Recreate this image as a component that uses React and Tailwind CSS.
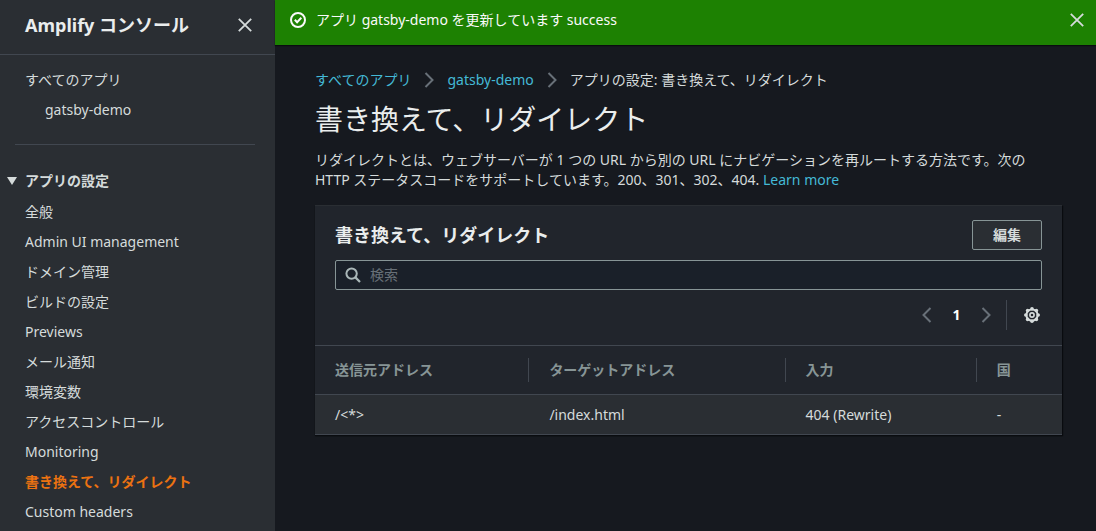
import React from "react";

const settingsLinks = [
  "全般",
  "Admin UI management",
  "ドメイン管理",
  "ビルドの設定",
  "Previews",
  "メール通知",
  "環境変数",
  "アクセスコントロール",
  "Monitoring",
  "書き換えて、リダイレクト",
  "Custom headers",
];
const activeLink = "書き換えて、リダイレクト";

const columns = [
  { label: "送信元アドレス", width: "w-[28.7%]" },
  { label: "ターゲットアドレス", width: "w-[34.3%]" },
  { label: "入力", width: "w-[25.6%]" },
  { label: "国", width: "w-[11.4%]" },
];

const rows = [["/<*>", "/index.html", "404 (Rewrite)", "-"]];

function Icon({ className = "", children }) {
  return (
    <svg
      viewBox="0 0 16 16"
      className={`size-4 shrink-0 fill-none stroke-current ${className}`}
      aria-hidden="true"
    >
      {children}
    </svg>
  );
}

function CloseIcon() {
  return (
    <Icon>
      <path d="M1.8 1.8l12.4 12.4M14.2 1.8L1.8 14.2" strokeWidth="1.8" />
    </Icon>
  );
}

function ChevronRight() {
  return (
    <Icon>
      <path d="M4.5 1l7 7-7 7" strokeWidth="2" />
    </Icon>
  );
}

function ChevronLeft() {
  return (
    <Icon>
      <path d="M11.5 1l-7 7 7 7" strokeWidth="2" />
    </Icon>
  );
}

function SuccessIcon() {
  return (
    <Icon>
      <circle cx="8" cy="8" r="7" strokeWidth="2" />
      <path d="M4.8 7.8l2.3 2.4 4.2-4.4" strokeWidth="2" />
    </Icon>
  );
}

function SearchIcon() {
  return (
    <Icon>
      <circle cx="6.6" cy="6.6" r="5.2" strokeWidth="2" />
      <path d="M10.4 10.4l4.6 4.6" strokeWidth="2.2" />
    </Icon>
  );
}

function GearIcon() {
  return (
    <Icon>
      <circle cx="8" cy="8" r="5.6" strokeWidth="2" />
      <g className="fill-current stroke-none">
        <circle cx="8" cy="1.8" r="1.8" />
        <circle cx="12.4" cy="3.6" r="1.8" />
        <circle cx="14.2" cy="8" r="1.8" />
        <circle cx="12.4" cy="12.4" r="1.8" />
        <circle cx="8" cy="14.2" r="1.8" />
        <circle cx="3.6" cy="12.4" r="1.8" />
        <circle cx="1.8" cy="8" r="1.8" />
        <circle cx="3.6" cy="3.6" r="1.8" />
      </g>
      <circle cx="8" cy="8" r="2.1" strokeWidth="1.6" />
    </Icon>
  );
}

function Sidebar() {
  return (
    <aside className="w-[275px] shrink-0 bg-[#2a2e33]">
      <header className="flex h-[55px] items-center justify-between border-b border-[#414750] pr-[22px] pb-1 pl-[25px]">
        <h2 className="text-lg font-bold text-[#eaeded]">Amplify コンソール</h2>
        <button type="button" aria-label="閉じる" className="text-[#d5dbdb]">
          <CloseIcon />
        </button>
      </header>
      <nav>
        <ul className="flex flex-col gap-[10px] px-[25px] pt-[15px]">
          <li>
            <a href="#apps">すべてのアプリ</a>
          </li>
          <li className="pl-5">
            <a href="#gatsby-demo">gatsby-demo</a>
          </li>
        </ul>
        <hr className="mt-6 mr-5 ml-[15px] border-[#414750]" />
        <details open className="pt-[26px]">
          <summary className="flex cursor-pointer list-none items-center gap-2 pl-[7px] font-bold">
            <svg viewBox="0 0 10 8" className="h-2 w-[10px] fill-current" aria-hidden="true">
              <path d="M0 0h10L5 8z" />
            </svg>
            アプリの設定
          </summary>
          <ul className="mt-[11px] flex flex-col gap-[10px] px-[25px]">
            {settingsLinks.map((label) => (
              <li key={label}>
                <a
                  href="#settings"
                  className={label === activeLink ? "font-bold text-[#ec7211]" : ""}
                >
                  {label}
                </a>
              </li>
            ))}
          </ul>
        </details>
      </nav>
    </aside>
  );
}

function Flash() {
  return (
    <div
      role="status"
      className="flex items-center gap-[10px] bg-[#1d8102] pt-[10px] pr-[11px] pb-[15px] pl-[15px] text-[#fafafa] shadow-[0_1px_1px_0_#0a0c10]"
    >
      <SuccessIcon />
      <p className="grow">アプリ gatsby-demo を更新しています success</p>
      <button type="button" aria-label="閉じる" className="text-[#d5dbdb]">
        <CloseIcon />
      </button>
    </div>
  );
}

function Breadcrumbs() {
  return (
    <nav aria-label="パンくずリスト">
      <ol className="flex items-center gap-[10px]">
        <li>
          <a href="#apps" className="text-[#44b9d6]">すべてのアプリ</a>
        </li>
        <li className="flex items-center gap-[10px] text-[#687078]">
          <ChevronRight />
          <a href="#gatsby-demo" className="text-[#44b9d6]">gatsby-demo</a>
        </li>
        <li className="flex items-center gap-[10px] text-[#687078]">
          <ChevronRight />
          <span className="text-[#d5dbdb]">アプリの設定: 書き換えて、リダイレクト</span>
        </li>
      </ol>
    </nav>
  );
}

function RedirectsCard() {
  return (
    <section className="mt-[15px] border-t border-[#2a2e33] bg-[#21252c] shadow-[0_1px_1px_0_#0a0c10,1px_1px_1px_0_#0a0c10]">
      <div className="px-5 pt-[14px] pb-[15px]">
        <div className="flex items-center justify-between">
          <h2 className="text-lg font-bold text-[#eaeded]">書き換えて、リダイレクト</h2>
          <button
            type="button"
            className="h-[30px] rounded-[2px] border border-[#879596] bg-[#2a2e33] px-5 font-bold leading-[28px]"
          >
            編集
          </button>
        </div>
        <label className="mt-[10px] flex h-[30px] items-center gap-[9px] rounded-[2px] border border-[#879596] bg-[#1a2029] pl-[9px] text-[#aab7b8]">
          <SearchIcon />
          <input
            type="search"
            aria-label="検索"
            placeholder="検索"
            className="min-w-0 grow bg-transparent outline-none placeholder:text-[#687078]"
          />
        </label>
        <div className="mt-[10px] flex h-[30px] items-center justify-end">
          <button type="button" aria-label="前のページ" className="text-[#687078]">
            <ChevronLeft />
          </button>
          <button type="button" className="w-[43px] text-center font-bold text-white">1</button>
          <button type="button" aria-label="次のページ" className="text-[#687078]">
            <ChevronRight />
          </button>
          <span className="mr-[17px] ml-3 h-full border-l border-[#414750]" />
          <button type="button" aria-label="設定" className="mr-[2px] text-[#d5dbdb]">
            <GearIcon />
          </button>
        </div>
      </div>
      <table className="w-full table-fixed border-separate border-spacing-0 text-left">
        <thead>
          <tr>
            {columns.map(({ label, width }, i) => (
              <th
                key={label}
                scope="col"
                className={`border-y border-[#414750] py-3 pl-5 font-bold text-[#879596] ${width}`}
              >
                <div
                  className={`h-6 leading-6 ${i < columns.length - 1 ? "border-r border-[#414750]" : ""}`}
                >
                  {label}
                </div>
              </th>
            ))}
          </tr>
        </thead>
        <tbody>
          {rows.map((row) => (
            <tr key={row[0]} className="bg-[#2a2e33]">
              {row.map((cell) => (
                <td key={cell} className="border-b border-[#414750] py-[10px] pl-5 leading-[19px]">
                  {cell}
                </td>
              ))}
            </tr>
          ))}
        </tbody>
      </table>
    </section>
  );
}

export default function App() {
  return (
    <div className="flex h-screen overflow-hidden bg-[#16191f] font-['Noto_Sans','Noto_Sans_CJK_JP',sans-serif] text-sm leading-5 text-[#d5dbdb]">
      <Sidebar />
      <div className="min-w-0 grow">
        <Flash />
        <main className="pt-[25px] pr-[34px] pl-10">
          <Breadcrumbs />
          <h1 className="mt-[11px] text-[28px] leading-9 text-[#eaeded]">
            書き換えて、リダイレクト
          </h1>
          <p className="mt-[13px]">
            リダイレクトとは、ウェブサーバーが 1 つの URL から別の URL
            にナビゲーションを再ルートする方法です。次の HTTP
            ステータスコードをサポートしています。200、301、302、404.{" "}
            <a href="#learn-more" className="inline-block text-[#44b9d6]">Learn more</a>
          </p>
          <RedirectsCard />
        </main>
      </div>
    </div>
  );
}
